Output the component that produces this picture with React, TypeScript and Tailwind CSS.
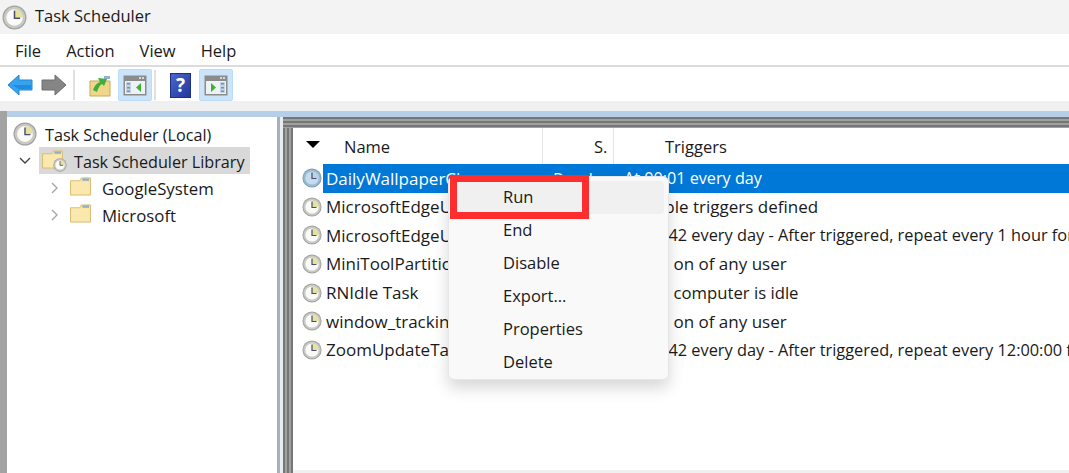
import { ReactNode } from 'react';

const font = { fontFamily: '"Open Sans", "Noto Sans", sans-serif' };

function ClockIcon({ size = 20, blue = false }: { size?: number; blue?: boolean }) {
  return (
    <svg width={size} height={size} viewBox="0 0 20 20" className="shrink-0">
      <circle cx="10" cy="10" r="9.6" fill={blue ? '#7f9fbb' : '#a2a2a0'} />
      <circle cx="10" cy="10" r="8.6" fill={blue ? '#9dbad3' : '#c9c9c7'} />
      <circle cx="10" cy="10" r="6.6" fill={blue ? '#c5dbee' : '#fafaf8'} />
      <path d="M10 10 L10 3.4 A6.6 6.6 0 0 1 16.6 10 Z" fill={blue ? '#bcd3e6' : '#e6e29c'} />
      <path d="M10 4.5 V10.5 H14.5" fill="none" stroke="#4a4a78" strokeWidth="1.2" />
    </svg>
  );
}

function FolderIcon({ clock = false }: { clock?: boolean }) {
  return (
    <div className="relative h-[24px] w-[26px] shrink-0">
      <svg width="21" height="20" viewBox="0 0 22 21" className="absolute left-0 top-0">
        <path d="M0.5 5 V20 H21.5 V2 H12 L10 5 Z" fill="#f9e29f" stroke="#d9bd70" />
        <rect x="1.5" y="6" width="19" height="13" fill="#fbe8ae" />
        <rect x="13" y="2.5" width="7" height="2.5" fill="#8ab0cc" />
      </svg>
      {clock && (
        <div className="absolute left-[11px] top-[9px]">
          <ClockIcon size={14} />
        </div>
      )}
    </div>
  );
}

function PaneToggleIcon({ side }: { side: 'left' | 'right' }) {
  const listX = side === 'left' ? 3 : 16;
  const panelX = side === 'left' ? 10 : 3;
  return (
    <svg width="24" height="21" viewBox="0 0 24 21">
      <rect x="0.5" y="0.5" width="23" height="20" fill="#8b8b8b" />
      <rect x="16" y="2" width="2" height="2" fill="#d8d8d8" />
      <rect x="19" y="2" width="2" height="2" fill="#d8d8d8" />
      <rect x="2" y="6" width="20" height="13" fill="#eef2f5" />
      <rect x={listX} y="7" width="5" height="11" fill="#c4d3e2" />
      <rect x={listX + 1} y="8" width="3" height="1.5" fill="#6f94bb" />
      <rect x={listX + 1} y="12" width="3" height="1.5" fill="#6f94bb" />
      <rect x={listX + 1} y="15.5" width="3" height="1.5" fill="#6f94bb" />
      {side === 'left' ? (
        <path d={`M${panelX + 8} 8 V17 L${panelX + 3} 12.5 Z`} fill="#3fae3a" />
      ) : (
        <path d={`M${panelX + 4} 8 V17 L${panelX + 9} 12.5 Z`} fill="#3fae3a" />
      )}
    </svg>
  );
}

function ToggleButton({ children }: { children: ReactNode }) {
  return (
    <div className="flex h-[32px] w-[34px] items-center justify-center rounded-[2px] border border-[#bcdcf7] bg-[#cce4f9]">
      {children}
    </div>
  );
}

interface Row {
  name: string;
  trigger: ReactNode;
  triggerClass: string;
  selected?: boolean;
}

// the "At log on" rows: the words before "on" sit behind the context menu
const logOnTrigger = (
  <>
    <span className="pr-[5px]">At log</span> on of any user
  </>
);

const rows: Row[] = [
  { name: 'DailyWallpaperChange', trigger: 'At 00:01 every day', triggerClass: 'pl-[10px] text-[16.2px]', selected: true },
  { name: 'MicrosoftEdgeUpdateTaskMachineCore', trigger: 'Multiple triggers defined', triggerClass: 'pl-[10px]' },
  {
    name: 'MicrosoftEdgeUpdateTaskMachineUA',
    trigger: 'At 12:42 every day - After triggered, repeat every 1 hour for a duration of 1 day',
    triggerClass: 'pl-[11px] text-[16.35px]',
  },
  { name: 'MiniToolPartitionWizard', trigger: logOnTrigger, triggerClass: 'pl-[5px]' },
  {
    name: 'RNIdle Task',
    trigger: (
      <>
        <span className="pr-[5px]">When</span> computer is idle
      </>
    ),
    triggerClass: 'pl-[5px] text-[16.7px]',
  },
  { name: 'window_tracking_task', trigger: logOnTrigger, triggerClass: 'pl-[5px]' },
  {
    name: 'ZoomUpdateTaskUser',
    trigger: 'At 12:42 every day - After triggered, repeat every 12:00:00 for a duration of 1 day',
    triggerClass: 'pl-[11px] text-[16.35px]',
  },
];

const menuItems = ['Run', 'End', 'Disable', 'Export...', 'Properties', 'Delete'];

export default function App() {
  return (
    <div style={font} className="relative flex h-[473px] w-[1069px] flex-col overflow-hidden bg-white text-[17px] text-[#1a1a1a]">
      {/* title bar */}
      <div className="flex h-[34px] items-center bg-[#f3f3f3] pl-[2px]">
        <ClockIcon size={25} />
        <span className="mb-[2px] ml-[8px] text-[16.5px]">Task Scheduler</span>
      </div>

      {/* menu */}
      <div className="flex h-[33px] items-center gap-[25px] border-b-2 border-[#dcdcdc] pl-[15px] pt-[4px] text-[16.5px]">
        <span>File</span>
        <span>Action</span>
        <span>View</span>
        <span>Help</span>
      </div>

      {/* toolbar */}
      <div className="flex h-[34px] items-center pl-[7px] pt-[2px]">
        <svg width="60" height="24" viewBox="0 0 60 24">
          <path d="M1 12 L12 2 V7 H25 V17 H12 V22 Z" fill="#35a3ee" stroke="#2a86cf" />
          <path d="M5 12 H24 V16 H12 Z" fill="#0f7fd8" opacity="0.6" />
          <path d="M59 12 L48 2 V7 H35 V17 H48 V22 Z" fill="#858585" stroke="#6f6f6f" />
        </svg>
        <div className="ml-[6px] h-[30px] w-[2px] bg-[#e0e0e0]" />
        <svg width="23" height="24" viewBox="0 0 23 24" className="ml-[14px]">
          <path d="M1 8 H21 V23 H1 Z" fill="#f0d688" stroke="#c9a95c" />
          <rect x="15" y="3" width="6" height="3" fill="#8fb3cf" />
          <path d="M4 17 C6 12 8 10 11 9 L9 5 L18 6 L15 13 L13 11 C11 12 9 15 8 19 Z" fill="#3fae3a" />
        </svg>
        <div className="ml-[6px]">
          <ToggleButton>
            <PaneToggleIcon side="left" />
          </ToggleButton>
        </div>
        <div className="ml-[2px] h-[30px] w-[2px] bg-[#e0e0e0]" />
        <div className="ml-[14px] flex h-[25px] w-[21px] items-center justify-center border border-[#1f2f80] bg-gradient-to-br from-[#4a66d0] to-[#23389a] text-[19px] leading-none font-bold text-white">
          ?
        </div>
        <div className="ml-[8px]">
          <ToggleButton>
            <PaneToggleIcon side="right" />
          </ToggleButton>
        </div>
      </div>

      <div className="h-[10px] bg-[#f0f0f0]" />

      {/* panes */}
      <div className="flex min-h-0 flex-1">
        <div className="w-[7px] bg-[#a3a3a3]" />
        <div className="flex min-w-0 flex-1 flex-col">
          <div className="h-[6px] bg-[#b5cfe8]" />
          <div className="flex min-h-0 flex-1">
            {/* tree */}
            <div className="w-[270px] bg-white pt-[3px] pl-[6px]">
              <div className="flex h-[27px] items-center">
                <ClockIcon size={24} />
                <span className="ml-[8px] pt-[4px] text-[16.2px]">Task Scheduler (Local)</span>
              </div>
              <div className="flex h-[27px] items-center">
                <svg width="14" height="10" viewBox="0 0 14 10" className="ml-[5px]">
                  <path d="M2 2 L7 7 L12 2" fill="none" stroke="#444" strokeWidth="1.4" />
                </svg>
                <div className="ml-[7px] flex h-[27px] w-[211px] items-center bg-[#d9d9d9] pl-[3px]">
                  <FolderIcon clock />
                  <span className="ml-[6px] pt-[3px] text-[16.2px]">Task Scheduler Library</span>
                </div>
              </div>
              {['GoogleSystem', 'Microsoft'].map((name) => (
                <div key={name} className="flex h-[27px] items-center">
                  <svg width="10" height="14" viewBox="0 0 10 14" className="ml-[37px]">
                    <path d="M2 2 L7 7 L2 12" fill="none" stroke="#a6a6a6" strokeWidth="1.4" />
                  </svg>
                  <div className="ml-[10px]">
                    <FolderIcon />
                  </div>
                  <span className="ml-[6px] pt-[2px] text-[16.8px]">{name}</span>
                </div>
              ))}
            </div>

            {/* splitter */}
            <div className="w-[3px] bg-[#a8b0b8]" />
            <div className="w-[3px] bg-[#e9edf1]" />

            {/* list, striped frame */}
            <div className="flex min-w-0 flex-1 flex-col">
              <div className="h-[11px] bg-[repeating-linear-gradient(180deg,#767676_0px,#767676_2px,#a0a0a0_2px,#a0a0a0_4px)]" />
              <div className="flex min-h-0 flex-1">
                <div className="w-[10px] bg-[repeating-linear-gradient(90deg,#767676_0px,#767676_2px,#a0a0a0_2px,#a0a0a0_4px)]" />
                <div className="flex min-w-0 flex-1 flex-col">
                  <div className="min-h-0 flex-1 overflow-hidden bg-white">
                    <div className="flex h-[36px] items-center text-[16.5px]">
                      <div className="relative flex h-full w-[250px] items-center border-r border-[#e5e5e5] pl-[51px] pt-[2px]">
                        <div className="absolute left-[13px] top-[13px] h-0 w-0 border-x-[7px] border-t-[7px] border-x-transparent border-t-black" />
                        Name
                      </div>
                      <div className="flex h-full w-[71px] items-center border-r border-[#e5e5e5] pl-[51px] pt-[2px]">
                        <span className="w-[14px]">S.</span>
                      </div>
                      <div className="pl-[51px] pt-[2px]">Triggers</div>
                    </div>
                    {rows.map((row) => (
                      <div key={row.name} className="flex h-[28.6px] items-center whitespace-nowrap">
                        <div className="ml-[9px] flex w-[21px] shrink-0 justify-start">
                          <ClockIcon size={20} blue={row.selected} />
                        </div>
                        <div className={`flex h-[28.6px] flex-1 items-center ${row.selected ? 'bg-[#0078d7] text-white' : ''}`}>
                          <div className="w-[220px] shrink-0 overflow-hidden pl-[3px]">{row.name}</div>
                          <div className="w-[71px] shrink-0 overflow-hidden pl-[10px]">Ready</div>
                          <div className={row.triggerClass}>{row.trigger}</div>
                        </div>
                      </div>
                    ))}
                  </div>
                  <div className="h-[3px] bg-[#f0f0f0]" />
                </div>
              </div>
            </div>
          </div>
        </div>
      </div>

      {/* context menu */}
      <div className="absolute left-[448px] top-[176px] w-[221px] rounded-[6px] border border-[#e6e6e6] bg-[#f9f9f9] px-[4px] pt-[4px] shadow-[0_8px_16px_rgba(0,0,0,0.16)]">
        {menuItems.map((item, i) => (
          <div
            key={item}
            className={`flex h-[33px] items-center rounded-[4px] pl-[50px] text-[16.5px] ${i === 0 ? 'bg-[#f0f0f0]' : ''}`}
          >
            {item}
          </div>
        ))}
      </div>

      {/* red callout */}
      <div className="absolute left-[450px] top-[175px] h-[44px] w-[139px] border-[7px] border-[#fe2e2e]" />
    </div>
  );
}
